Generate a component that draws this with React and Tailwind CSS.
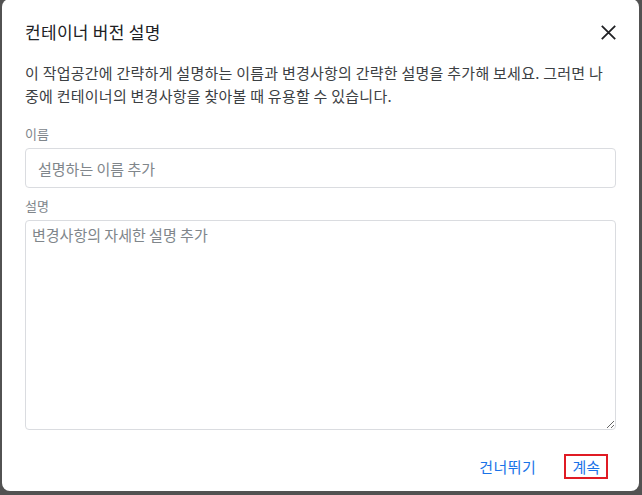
export default function App() {
  const font = { fontFamily: '"Noto Sans CJK KR", "Noto Sans", sans-serif' };

  return (
    <div className="h-[495px] w-[642px] overflow-hidden bg-[#525252]">
      <div
        style={font}
        className="ml-[2px] mt-[-1px] flex h-[492px] w-[637px] flex-col rounded-lg bg-white px-[23px] pb-[12px] pt-[23px]"
      >
        {/* Header */}
        <div className="flex h-[20px] items-center justify-between">
          <h2 className="text-[17px] leading-[20px] tracking-[0.3px] text-[#202124]">
            컨테이너 버전 설명
          </h2>
          <button className="text-[#202124]">
            <svg width="15" height="15" viewBox="0 0 15 15" fill="none" stroke="currentColor" strokeWidth="1.8">
              <path d="M0.8 0.8L14.2 14.2M14.2 0.8L0.8 14.2" />
            </svg>
          </button>
        </div>

        {/* Description */}
        <p className="mt-[19px] break-all text-[15px] leading-[23px] tracking-[0.25px] text-[#3c4043]">
          이 작업공간에 간략하게 설명하는 이름과 변경사항의 간략한 설명을 추가해 보세요. 그러면 나중에 컨테이너의 변경사항을 찾아볼 때 유용할 수 있습니다.
        </p>

        {/* Name */}
        <label className="mt-[19px] text-[13px] leading-4 text-[#80868b]">이름</label>
        <input
          style={font}
          placeholder="설명하는 이름 추가"
          className="mt-[6px] h-[40px] w-full rounded border border-[#dadce0] px-[12px] text-[15px] text-[#202124] outline-none placeholder:text-[#80868b]"
        />

        {/* Description field */}
        <label className="mt-[10px] text-[13px] leading-4 text-[#80868b]">설명</label>
        <textarea
          style={font}
          placeholder="변경사항의 자세한 설명 추가"
          className="mt-[6px] h-[210px] w-full rounded border border-[#dadce0] px-[6px] pt-[4px] text-[15px] leading-[20px] text-[#202124] outline-none placeholder:text-[#80868b]"
        />

        {/* Actions */}
        <div className="mt-[24px] flex items-center justify-end gap-[20px] pr-[8px]">
          <button className="h-[25px] border-2 border-transparent px-[6px] text-[15px] leading-none tracking-[0.5px] text-[#1a73e8]">
            건너뛰기
          </button>
          <button className="h-[25px] border-2 border-[#e01b24] px-[6px] text-[15px] leading-none text-[#1a73e8]">
            계속
          </button>
        </div>
      </div>
    </div>
  );
}
